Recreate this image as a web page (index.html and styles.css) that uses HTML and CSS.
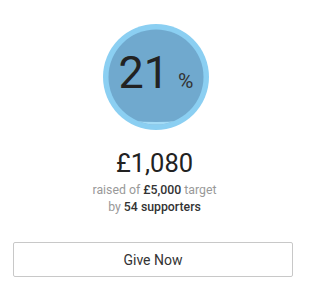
FILE: index.html
```html
<!DOCTYPE html>
<html>
<head>
<meta charset="utf-8">
<link rel="stylesheet" href="styles.css">
</head>
<body>
<div class="widget">
  <div class="gauge">
    <svg class="gauge-bg" width="106" height="106" viewBox="0 0 106 106">
      <defs>
        <clipPath id="inner"><circle cx="53" cy="53" r="47.5"/></clipPath>
      </defs>
      <circle cx="53" cy="53" r="53" fill="#8bcff2"/>
      <circle cx="53" cy="53" r="47.5" fill="#70a9ce"/>
      <g clip-path="url(#inner)">
        <path d="M28 96.5 Q53 99.5 78 96.5 L78 106 L28 106 Z" fill="#a3dbf6"/>
      </g>
    </svg>
    <div class="gauge-label"><span class="pct">21</span><span class="pct-sign">%</span></div>
  </div>
  <div class="amount">£1,080</div>
  <div class="meta first">raised of <b>£5,000</b> target</div>
  <div class="meta">by <b>54 supporters</b></div>
  <button class="give">Give Now</button>
</div>
</body>
</html>
```

FILE: styles.css
```css
html, body {
  margin: 0;
  padding: 0;
  background: #fff;
}
body {
  font-family: Roboto, "Liberation Sans", sans-serif;
  color: #333;
}
.widget {
  width: 309px;
  display: flex;
  flex-direction: column;
  align-items: center;
  padding-top: 24px;
}
.gauge {
  position: relative;
  width: 106px;
  height: 106px;
  margin-left: 3px;
}
.gauge-bg {
  display: block;
}
.gauge-label {
  position: absolute;
  inset: 0;
  display: flex;
  align-items: baseline;
  justify-content: center;
  padding-top: 22px;
  box-sizing: border-box;
  color: #222;
}
.pct {
  font-size: 45px;
  line-height: 54px;
  font-weight: 400;
}
.pct-sign {
  font-size: 21px;
  margin-left: 9px;
  color: #333;
}
.amount {
  font-size: 25.5px;
  line-height: 30px;
  margin-top: 18px;
  color: #222;
}
.meta {
  font-size: 12.3px;
  line-height: 17px;
  color: #999;
}
.meta.first {
  margin-top: 4px;
}
.meta b {
  font-weight: 500;
  color: #333;
}
.give {
  margin-top: 26px;
  align-self: flex-start;
  margin-left: 13px;
  width: 280px;
  height: 35px;
  background: #fff;
  border: 1px solid #c8c8c8;
  border-radius: 2px;
  font-family: Roboto, "Liberation Sans", sans-serif;
  font-size: 14px;
  color: #333;
  padding: 0;
}
```
